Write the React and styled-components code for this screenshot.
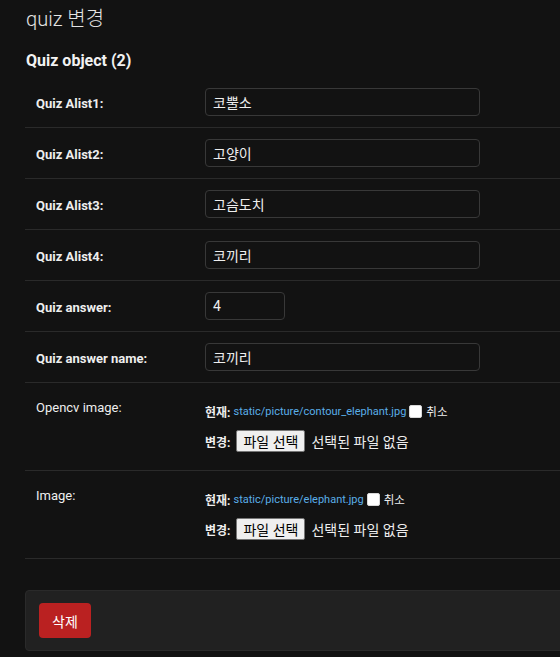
import React from "react";
import styled, { createGlobalStyle } from "styled-components";

const GlobalStyle = createGlobalStyle`
  html, body { margin: 0; padding: 0; overflow: hidden; }
  body {
    background: #121212;
    color: #eeeeee;
    font-family: Roboto, "Noto Sans CJK KR", "Noto Sans", sans-serif;
  }
`;

const Content = styled.div`
  width: 660px;
  padding: 7px 0 20px 25px;
`;

const Title = styled.h1`
  margin: 0 0 20px 1px;
  font-size: 20px;
  line-height: 24px;
  font-weight: 300;
  color: #e4e4e4;
`;

const Heading = styled.h2`
  margin: 0 0 6px 1px;
  font-size: 16px;
  line-height: 20px;
  font-weight: 700;
  color: #f2f2f2;
`;

const Fieldset = styled.div`
  display: flex;
  flex-direction: column;
`;

const Row = styled.div`
  display: flex;
  align-items: flex-start;
  padding: 11px 10px 11px 11px;
  border-bottom: 1px solid #2a2a2a;
`;

const Label = styled.label`
  width: 169px;
  flex: none;
  padding-top: ${(p) => (p.$file ? 4 : 6)}px;
  font-size: 13px;
  line-height: 20px;
  font-weight: ${(p) => (p.$required ? 700 : 400)};
  color: #eeeeee;
`;

const TextInput = styled.div`
  box-sizing: border-box;
  width: ${(p) => p.$width}px;
  height: 28px;
  padding: 0 7px;
  border: 1px solid #383838;
  border-radius: 4px;
  background: #121212;
  display: flex;
  align-items: center;
  font-size: 14px;
  color: #eeeeee;
`;

const FileBlock = styled.div`
  padding: 7px 0 5px;
  display: flex;
  flex-direction: column;
`;

const FileLine = styled.div`
  display: flex;
  align-items: center;
  height: ${(p) => (p.$second ? 26 : 20)}px;
  margin-top: ${(p) => (p.$second ? 7 : 0)}px;
  font-size: 11px;
  color: #eeeeee;
`;

const Strong = styled.span`
  font-size: 12px;
  font-weight: 700;
  margin-right: ${(p) => (p.$gap ? p.$gap : 3)}px;
`;

const Link = styled.span`
  color: #5aaee8;
`;

const Check = styled.span`
  box-sizing: border-box;
  width: 13px;
  height: 13px;
  margin: 0 4px 0 3px;
  background: #ffffff;
  border: 1px solid #d8d8d8;
  border-radius: 2px;
`;

const CancelText = styled.span`
  font-size: 11.5px;
`;

const FileButton = styled.span`
  box-sizing: border-box;
  height: 22px;
  padding: 0 6px;
  display: inline-flex;
  align-items: center;
  background: #efefef;
  border: 1px solid #767676;
  border-radius: 2px;
  color: #000000;
  font-size: 14px;
`;

const NoFile = styled.span`
  margin-left: 6px;
  font-size: 14px;
  color: #eeeeee;
`;

const SubmitRow = styled.div`
  margin-top: 31px;
  padding: 12px 13px;
  background: #212121;
  border: 1px solid #2a2a2a;
  border-radius: 4px;
  display: flex;
`;

const DeleteButton = styled.button`
  height: 35px;
  padding: 0 13px;
  border: none;
  border-radius: 4px;
  background: #ba2121;
  color: #ffffff;
  font-family: inherit;
  font-size: 14px;
  cursor: pointer;
`;

const textRows = [
  { label: "Quiz Alist1:", value: "코뿔소", width: 275 },
  { label: "Quiz Alist2:", value: "고양이", width: 275 },
  { label: "Quiz Alist3:", value: "고슴도치", width: 275 },
  { label: "Quiz Alist4:", value: "코끼리", width: 275 },
  { label: "Quiz answer:", value: "4", width: 80 },
  { label: "Quiz answer name:", value: "코끼리", width: 275 },
];

const fileRows = [
  { label: "Opencv image:", path: "static/picture/contour_elephant.jpg" },
  { label: "Image:", path: "static/picture/elephant.jpg" },
];

export default function App() {
  return (
    <>
      <GlobalStyle />
      <Content>
        <Title>quiz 변경</Title>
        <Heading>Quiz object (2)</Heading>
        <Fieldset>
          {textRows.map((r) => (
            <Row key={r.label}>
              <Label $required>{r.label}</Label>
              <TextInput $width={r.width}>{r.value}</TextInput>
            </Row>
          ))}
          {fileRows.map((r) => (
            <Row key={r.label}>
              <Label $file>{r.label}</Label>
              <FileBlock>
                <FileLine>
                  <Strong $gap={3}>현재:</Strong>
                  <Link>{r.path}</Link>
                  <Check />
                  <CancelText>취소</CancelText>
                </FileLine>
                <FileLine $second>
                  <Strong $gap={6}>변경:</Strong>
                  <FileButton>파일 선택</FileButton>
                  <NoFile>선택된 파일 없음</NoFile>
                </FileLine>
              </FileBlock>
            </Row>
          ))}
        </Fieldset>
        <SubmitRow>
          <DeleteButton>삭제</DeleteButton>
        </SubmitRow>
      </Content>
    </>
  );
}
